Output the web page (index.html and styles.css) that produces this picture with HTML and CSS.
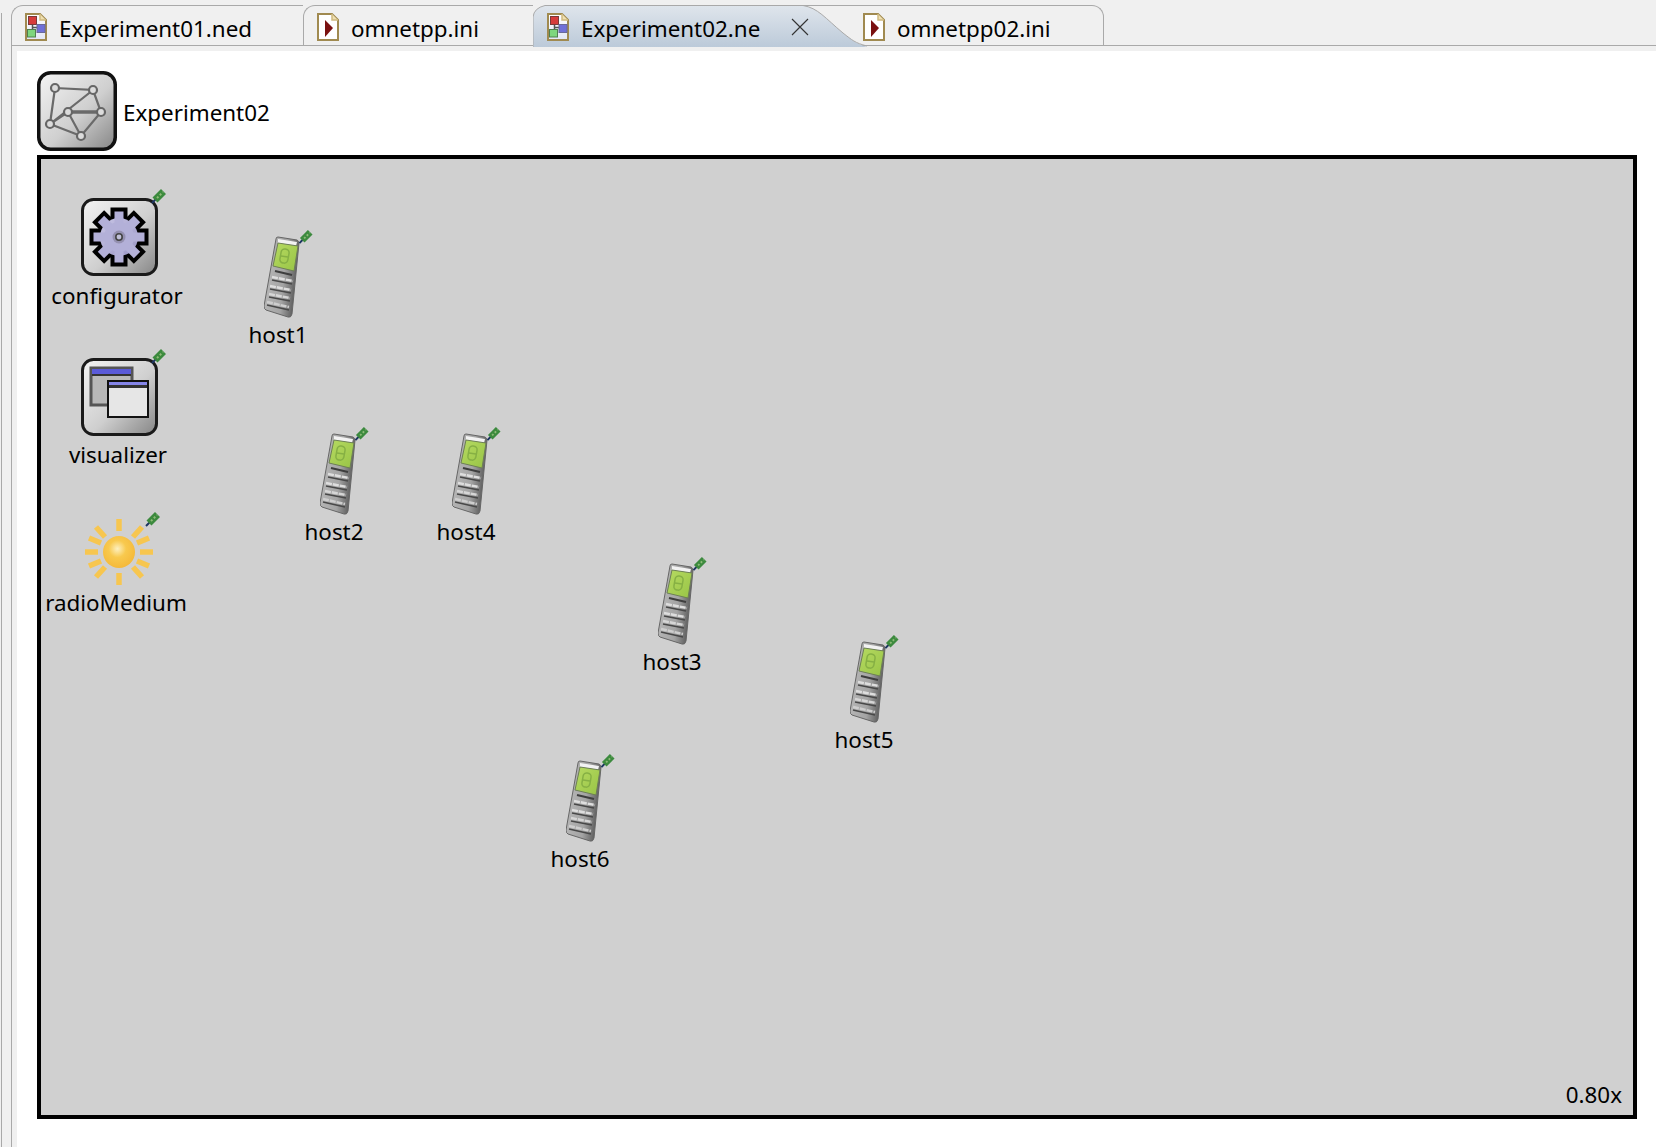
FILE: index.html
```html
<!DOCTYPE html>
<html lang="en">
<head>
<meta charset="utf-8">
<title>Experiment02</title>
<link rel="stylesheet" href="styles.css">
</head>
<body>
<svg class="defs" width="0" height="0" aria-hidden="true">
  <defs>
    <linearGradient id="boxGrad" x1="0" y1="0" x2="1" y2="1">
      <stop offset="0" stop-color="#f4f4f4"/>
      <stop offset="0.55" stop-color="#cfcfcf"/>
      <stop offset="1" stop-color="#858585"/>
    </linearGradient>
    <linearGradient id="gearGrad" x1="0" y1="0" x2="1" y2="1">
      <stop offset="0" stop-color="#c9c6e6"/>
      <stop offset="1" stop-color="#9a96c4"/>
    </linearGradient>
    <linearGradient id="phoneGrad" x1="0" y1="0" x2="1" y2="0.25">
      <stop offset="0" stop-color="#7c7c7c"/>
      <stop offset="0.22" stop-color="#b4b4b4"/>
      <stop offset="0.65" stop-color="#a4a4a4"/>
      <stop offset="1" stop-color="#5e5e5e"/>
    </linearGradient>
    <linearGradient id="screenGrad" x1="0" y1="0" x2="1" y2="1">
      <stop offset="0" stop-color="#b6da62"/>
      <stop offset="1" stop-color="#98c445"/>
    </linearGradient>
    <linearGradient id="docGrad" x1="0" y1="0" x2="0" y2="1">
      <stop offset="0" stop-color="#ffffff"/>
      <stop offset="1" stop-color="#e2e6f6"/>
    </linearGradient>
    <radialGradient id="sunGrad" cx="0.45" cy="0.4" r="0.6">
      <stop offset="0" stop-color="#fdf0c0"/>
      <stop offset="0.45" stop-color="#f8c94e"/>
      <stop offset="1" stop-color="#f5b93a"/>
    </radialGradient>
    <linearGradient id="activeTab" x1="0" y1="0" x2="0" y2="1">
      <stop offset="0" stop-color="#dfe5ec"/>
      <stop offset="1" stop-color="#bccad9"/>
    </linearGradient>
    <symbol id="pin" viewBox="0 0 16 16">
      <path d="M1 15 4.500 11.500" stroke="#1d3560" stroke-width="2"/>
      <path d="M4 12 12.500 3.500" stroke="#3c8a3e" stroke-width="7"/>
      <path d="M6 10 12 4" stroke="#8fbb78" stroke-width="2" stroke-dasharray="2 2"/>
    </symbol>
    <symbol id="ned" viewBox="0 0 22 28">
      <path d="M1 1H15L21 7V27H1Z" fill="url(#docGrad)" stroke="#a08a50" stroke-width="2"/>
      <path d="M15 1V7H21" fill="#efdfb0" stroke="#d0ba80" stroke-width="1.500"/>
      <path d="M7.500 11V18M7.500 14.500H13" stroke="#555" stroke-width="1.500" fill="none"/>
      <rect x="3.500" y="3.500" width="8" height="8" fill="#d63c3c" stroke="#7a3a3a"/>
      <rect x="12" y="11.500" width="8" height="8" fill="#7070d8" stroke="#6a6a9a"/>
      <rect x="2.500" y="16.500" width="8" height="7.500" fill="#7ed67e" stroke="#4f7f4f"/>
    </symbol>
    <symbol id="ini" viewBox="0 0 22 28">
      <path d="M1 1H15L21 7V27H1Z" fill="#fff" stroke="#a08a50" stroke-width="2"/>
      <path d="M15 1V7H21" fill="#efdfb0" stroke="#d0ba80" stroke-width="1.500"/>
      <path d="M8 7 16 15 8 24Z" fill="#7a1010"/>
    </symbol>
    <symbol id="phone" viewBox="0 0 50 90">
      <path d="M12 10 Q12 8 14 8 L33 11 Q35 12 35 14 L28 85 Q27 89 24 88 L2 81 Q0 80 0 77Z" fill="url(#phoneGrad)" stroke="#666" stroke-width="1"/>
      <path d="M14 10 33 13 32 17 14 14Z" fill="#f2f2f2"/>
      <path d="M14 14 34 17 30 42 9 37Z" fill="url(#screenGrad)" stroke="#6d7f55" stroke-width="1"/>
      <rect x="16.500" y="20" width="8" height="14" rx="3.500" fill="none" stroke="#86b044" stroke-width="1.500" transform="rotate(10 20 27)"/>
      <path d="M17 27 24 28" stroke="#86b044" stroke-width="1.300"/>
      <path d="M11 42 28 46" stroke="#3e3e3e" stroke-width="2"/>
      <path d="M8 48 29 52" stroke="#dedede" stroke-width="2.500" stroke-dasharray="6 1"/>
      <path d="M8 51 28 55" stroke="#484848" stroke-width="1.600"/>
      <path d="M6 57 27 61" stroke="#dedede" stroke-width="2.500" stroke-dasharray="6 1"/>
      <path d="M6 60 27 64" stroke="#484848" stroke-width="1.600"/>
      <path d="M5 65 26 69" stroke="#d6d6d6" stroke-width="2.500" stroke-dasharray="6 1"/>
      <path d="M5 68 26 72" stroke="#484848" stroke-width="1.600"/>
      <path d="M3 73 25 78" stroke="#cecece" stroke-width="2.500" stroke-dasharray="6 1"/>
      <path d="M3 76 25 81" stroke="#484848" stroke-width="1.600"/>
    </symbol>
  </defs>
</svg>

<div class="page">
  <div class="tabbar">
    <div class="tabs">
      <div class="tab tab-ned1"><svg class="tab-icon"><use href="#ned"/></svg><span>Experiment01.ned</span></div>
      <div class="tab tab-ini1"><svg class="tab-icon"><use href="#ini"/></svg><span>omnetpp.ini</span></div>
      <div class="tab tab-active">
        <svg class="tab-shape" viewBox="0 0 334 42" preserveAspectRatio="none" aria-hidden="true">
          <path d="M0 42V12Q1 3 12 0.500H270C285 3 292 13 310 28 319 35 322 38 334 42Z" fill="url(#activeTab)"/>
          <path d="M0 42V12Q1 3 12 0.500H270C285 3 292 13 310 28 319 35 322 38 334 41" fill="none" stroke="#a9a9a9"/>
          <path d="M270 0.500H334" fill="none" stroke="#a9a9a9"/>
        </svg>
        <svg class="tab-icon"><use href="#ned"/></svg><span>Experiment02.ne</span>
        <svg class="tab-close" viewBox="0 0 18 18" aria-hidden="true"><path d="M1 1 17 17M17 1 1 17" stroke="#333" stroke-width="1.100"/></svg>
      </div>
      <div class="tab tab-ini2"><svg class="tab-icon"><use href="#ini"/></svg><span>omnetpp02.ini</span></div>
    </div>
  </div>
  <div class="body">
    <div class="rail"></div>
    <main class="editor">
      <header class="module-head">
        <svg class="module-icon" viewBox="0 0 80 80" aria-hidden="true">
          <rect x="1.750" y="1.750" width="76.500" height="76.500" rx="12" fill="url(#boxGrad)" stroke="#111" stroke-width="3.500"/>
          <g fill="none" stroke="#6a6a6a" stroke-width="2.200">
            <path d="M18 17 56 19 13 53 18 17M56 19 64 41 44 65 13 53 31 41 44 65"/>
            <path d="M31 41H64" stroke-width="3.500"/>
          </g>
          <g fill="#dcdcdc" stroke="#666" stroke-width="2.200">
            <circle cx="18" cy="17" r="4"/><circle cx="56" cy="19" r="4"/><circle cx="31" cy="41" r="4"/>
            <circle cx="64" cy="41" r="4"/><circle cx="13" cy="53" r="4"/><circle cx="44" cy="65" r="4"/>
          </g>
        </svg>
        <span class="module-name">Experiment02</span>
      </header>
      <section class="canvas">
        <div class="node node-configurator">
          <svg class="icon-box" viewBox="0 0 86 88" aria-hidden="true">
            <rect x="1.500" y="11.500" width="74" height="75" rx="11" fill="url(#boxGrad)" stroke="#1a1a1a" stroke-width="3"/>
            <g transform="translate(38 49)">
              <g fill="#000">
                <circle r="22"/>
                <rect x="-8.500" y="-29.500" width="17" height="59"/>
                <rect x="-8.500" y="-29.500" width="17" height="59" transform="rotate(45)"/>
                <rect x="-8.500" y="-29.500" width="17" height="59" transform="rotate(90)"/>
                <rect x="-8.500" y="-29.500" width="17" height="59" transform="rotate(135)"/>
              </g>
              <circle r="19" fill="url(#gearGrad)"/>
              <g fill="#b3b0d8">
                <rect x="-4.500" y="-25.500" width="9" height="51"/>
                <rect x="-4.500" y="-25.500" width="9" height="51" transform="rotate(45)"/>
                <rect x="-4.500" y="-25.500" width="9" height="51" transform="rotate(90)"/>
                <rect x="-4.500" y="-25.500" width="9" height="51" transform="rotate(135)"/>
              </g>
              <circle r="15" fill="#b3b0d8"/>
              <circle r="6.500" fill="#9490b0"/>
              <circle r="3.200" fill="#c0c0d8" stroke="#444" stroke-width="1.600"/>
            </g>
            <use href="#pin" x="70" y="0" width="16" height="16"/>
          </svg>
          <span class="label">configurator</span>
        </div>
        <div class="node node-visualizer">
          <svg class="icon-box" viewBox="0 0 86 88" aria-hidden="true">
            <rect x="1.500" y="11.500" width="74" height="75" rx="11" fill="url(#boxGrad)" stroke="#1a1a1a" stroke-width="3"/>
            <rect x="10" y="20" width="41" height="37" fill="#b8b8b8" stroke="#555" stroke-width="3"/>
            <rect x="11" y="21" width="39" height="5" fill="#5a5ad8"/>
            <rect x="11" y="26" width="39" height="2" fill="#333"/>
            <rect x="27" y="33" width="40" height="36" fill="#e6e6e6" stroke="#111" stroke-width="2"/>
            <rect x="28" y="34" width="38" height="3" fill="#8585e8"/>
            <rect x="28" y="37" width="38" height="3" fill="#333"/>
            <use href="#pin" x="70" y="0" width="16" height="16"/>
          </svg>
          <span class="label">visualizer</span>
        </div>
        <div class="node node-radio">
          <svg class="icon-sun" viewBox="0 0 90 76" aria-hidden="true">
            <g stroke="#f7c64f" stroke-width="5.500" transform="translate(38 41)">
              <path d="M0 -33V-21M0 21V33M-34 0H-21M21 0H34"/>
              <path d="M-23 -25-14 -15M23 -25 14 -15M-23 25-14 15M23 25 14 15"/>
              <path d="M-30 -14-18 -9M30 -14 18 -9M-30 14-18 9M30 14 18 9"/>
            </g>
            <circle cx="38" cy="41" r="16" fill="url(#sunGrad)"/>
            <use href="#pin" x="64" y="0" width="16" height="16"/>
          </svg>
          <span class="label">radioMedium</span>
        </div>
        <div class="node node-host node-host1"><svg class="icon-phone"><use href="#phone"/><use href="#pin" x="34" y="0" width="16" height="15"/></svg><span class="label">host1</span></div>
        <div class="node node-host node-host2"><svg class="icon-phone"><use href="#phone"/><use href="#pin" x="34" y="0" width="16" height="15"/></svg><span class="label">host2</span></div>
        <div class="node node-host node-host4"><svg class="icon-phone"><use href="#phone"/><use href="#pin" x="34" y="0" width="16" height="15"/></svg><span class="label">host4</span></div>
        <div class="node node-host node-host3"><svg class="icon-phone"><use href="#phone"/><use href="#pin" x="34" y="0" width="16" height="15"/></svg><span class="label">host3</span></div>
        <div class="node node-host node-host5"><svg class="icon-phone"><use href="#phone"/><use href="#pin" x="34" y="0" width="16" height="15"/></svg><span class="label">host5</span></div>
        <div class="node node-host node-host6"><svg class="icon-phone"><use href="#phone"/><use href="#pin" x="34" y="0" width="16" height="15"/></svg><span class="label">host6</span></div>
        <span class="zoom">0.80x</span>
      </section>
    </main>
  </div>
</div>
</body>
</html>
```

FILE: styles.css
```css
* { box-sizing: border-box; }
html, body { margin: 0; height: 100%; }
body {
  font-family: "Noto Sans", "Open Sans", sans-serif;
  font-size: 22.4px;
  color: #000;
  background: #f0f0f0;
  overflow: hidden;
}
.defs { position: absolute; }
.page { width: 1656px; height: 1147px; display: flex; flex-direction: column; }

/* tab strip */
.tabbar {
  height: 51px;
  padding: 5px 0 0 11px;
  flex: none;
  position: relative;
}
.tabs {
  display: flex;
  height: 41px;
  border-bottom: 1px solid #a9a9a9;
}
.tab {
  height: 41px;
  display: flex;
  align-items: center;
  gap: 12px;
  border-top: 1px solid #a9a9a9;
  border-left: 1px solid #a9a9a9;
  border-top-left-radius: 12px;
  white-space: nowrap;
  position: relative;
  flex: none;
}
.tab span { line-height: 1; position: relative; top: 3px; }
.tab-icon { width: 22px; height: 28px; flex: none; position: relative; top: 1px; }
.tab-ned1 { width: 292px; padding-left: 13px; }
.tab-ini1 { width: 230px; padding-left: 13px; }
.tab-active { width: 299px; padding-left: 14px; border-left: 0; border-top-color: transparent; border-top-left-radius: 0; }
.tab-ini2 { width: 272px; padding-left: 31px; border-left: 0; border-right: 1px solid #a9a9a9; border-top-left-radius: 0; border-top-right-radius: 12px; }
.tab-shape { position: absolute; left: 0; top: -1px; width: 334px; height: 42px; z-index: 1; }
.tab-active > .tab-icon, .tab-active > span, .tab-close { z-index: 2; }
.tab-ini2 > .tab-icon, .tab-ini2 > span { z-index: 3; }
.tab-close { width: 18px; height: 18px; position: absolute; left: 258px; top: 12px; }

/* body */
.body { flex: 1; display: flex; min-height: 0; }
.rail {
  width: 17px;
  flex: none;
  position: relative;
  background: #f0f0f0;
}
.rail::before,
.rail::after {
  content: "";
  position: absolute;
  bottom: 0;
  width: 1px;
  background: #a9a9a9;
}
.rail::before { left: 1px; top: -38px; }
.rail::after { left: 11px; top: -6px; }
.editor {
  flex: 1;
  background: #fff;
  padding: 20px 19px 28px 20px;
  display: flex;
  flex-direction: column;
  min-width: 0;
}
.module-head { display: flex; align-items: center; height: 84px; flex: none; gap: 6px; }
.module-icon { width: 80px; height: 80px; flex: none; margin-bottom: 4px; }
.module-name { position: relative; top: -1px; }

/* canvas */
.canvas {
  flex: 1;
  border: 4px solid #000;
  background: #d0d0d0;
  position: relative;
}
.node {
  position: absolute;
  display: flex;
  flex-direction: column;
  align-items: center;
}
.label { line-height: 1; white-space: nowrap; }
.icon-box { width: 86px; height: 88px; display: block; margin-left: 14px; }
.icon-sun { width: 90px; height: 76px; display: block; margin-left: 20px; }
.icon-phone { width: 50px; height: 90px; display: block; margin-left: 21px; }

.node-configurator { left: 1px; top: 29px; width: 150px; }
.node-configurator .label { margin-top: 9px; }
.node-visualizer { left: 1px; top: 189px; width: 150px; }
.node-visualizer .label { margin-top: 8px; margin-left: 2px; }
.node-radio { left: 0; top: 352px; width: 150px; }
.node-radio .label { margin-top: 5px; }
.node-host { width: 100px; }
.node-host .label { margin-top: 5px; }
.node-host1 { left: 187px; top: 70px; }
.node-host2 { left: 243px; top: 267px; }
.node-host4 { left: 375px; top: 267px; }
.node-host3 { left: 581px; top: 397px; }
.node-host5 { left: 773px; top: 475px; }
.node-host6 { left: 489px; top: 594px; }

.zoom { position: absolute; right: 11px; bottom: 9px; line-height: 1; }
```
